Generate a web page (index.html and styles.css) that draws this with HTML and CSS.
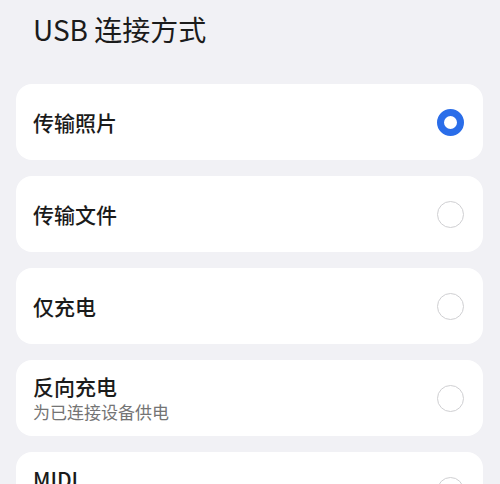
FILE: index.html
```html
<!DOCTYPE html>
<html lang="zh-CN">
  <head>
    <meta charset="UTF-8" />
    <meta name="viewport" content="width=device-width, initial-scale=1.0" />
    <title>USB 连接方式</title>
    <link rel="stylesheet" href="styles.css">
  </head>
  <body>
    <div class="page">
      <h1 class="title">USB 连接方式</h1>

      <div class="list">
        <div class="option">
          <div class="label">
            <span class="name">传输照片</span>
          </div>
          <span class="radio checked"></span>
        </div>

        <div class="option">
          <div class="label">
            <span class="name">传输文件</span>
          </div>
          <span class="radio"></span>
        </div>

        <div class="option">
          <div class="label">
            <span class="name">仅充电</span>
          </div>
          <span class="radio"></span>
        </div>

        <div class="option">
          <div class="label">
            <span class="name">反向充电</span>
            <span class="desc">为已连接设备供电</span>
          </div>
          <span class="radio"></span>
        </div>

        <div class="option top">
          <div class="label">
            <span class="name">MIDI</span>
          </div>
          <span class="radio"></span>
        </div>
      </div>
    </div>
  </body>
</html>
```

FILE: styles.css
```css
body {
  margin: 0;
  background-color: #f1f1f5;
  font-family: "Noto Sans CJK SC", "Noto Sans", sans-serif;
  color: #1b1b1b;
}
.page {
  padding: 0 17px 0 16px;
}
.title {
  margin: 0;
  height: 84px;
  padding-left: 17px;
  font-size: 28px;
  font-weight: 400;
  line-height: 58px;
}
.list {
  display: flex;
  flex-direction: column;
  gap: 16px;
}
.option {
  height: 76px;
  background-color: #ffffff;
  border-radius: 16px;
  display: flex;
  align-items: center;
  justify-content: space-between;
  padding: 0 19px 0 17px;
}
.option.top .label {
  align-self: flex-start;
  padding-top: 13px;
}
.label {
  display: flex;
  flex-direction: column;
}
.name {
  font-size: 21px;
  font-weight: 500;
  line-height: 28px;
}
.desc {
  font-size: 17px;
  color: #747474;
  line-height: 24px;
}
.radio {
  width: 27px;
  height: 27px;
  box-sizing: border-box;
  border: 1.5px solid #cfcfd2;
  border-radius: 50%;
}
.radio.checked {
  border: 7.5px solid #2a6de9;
}
```
